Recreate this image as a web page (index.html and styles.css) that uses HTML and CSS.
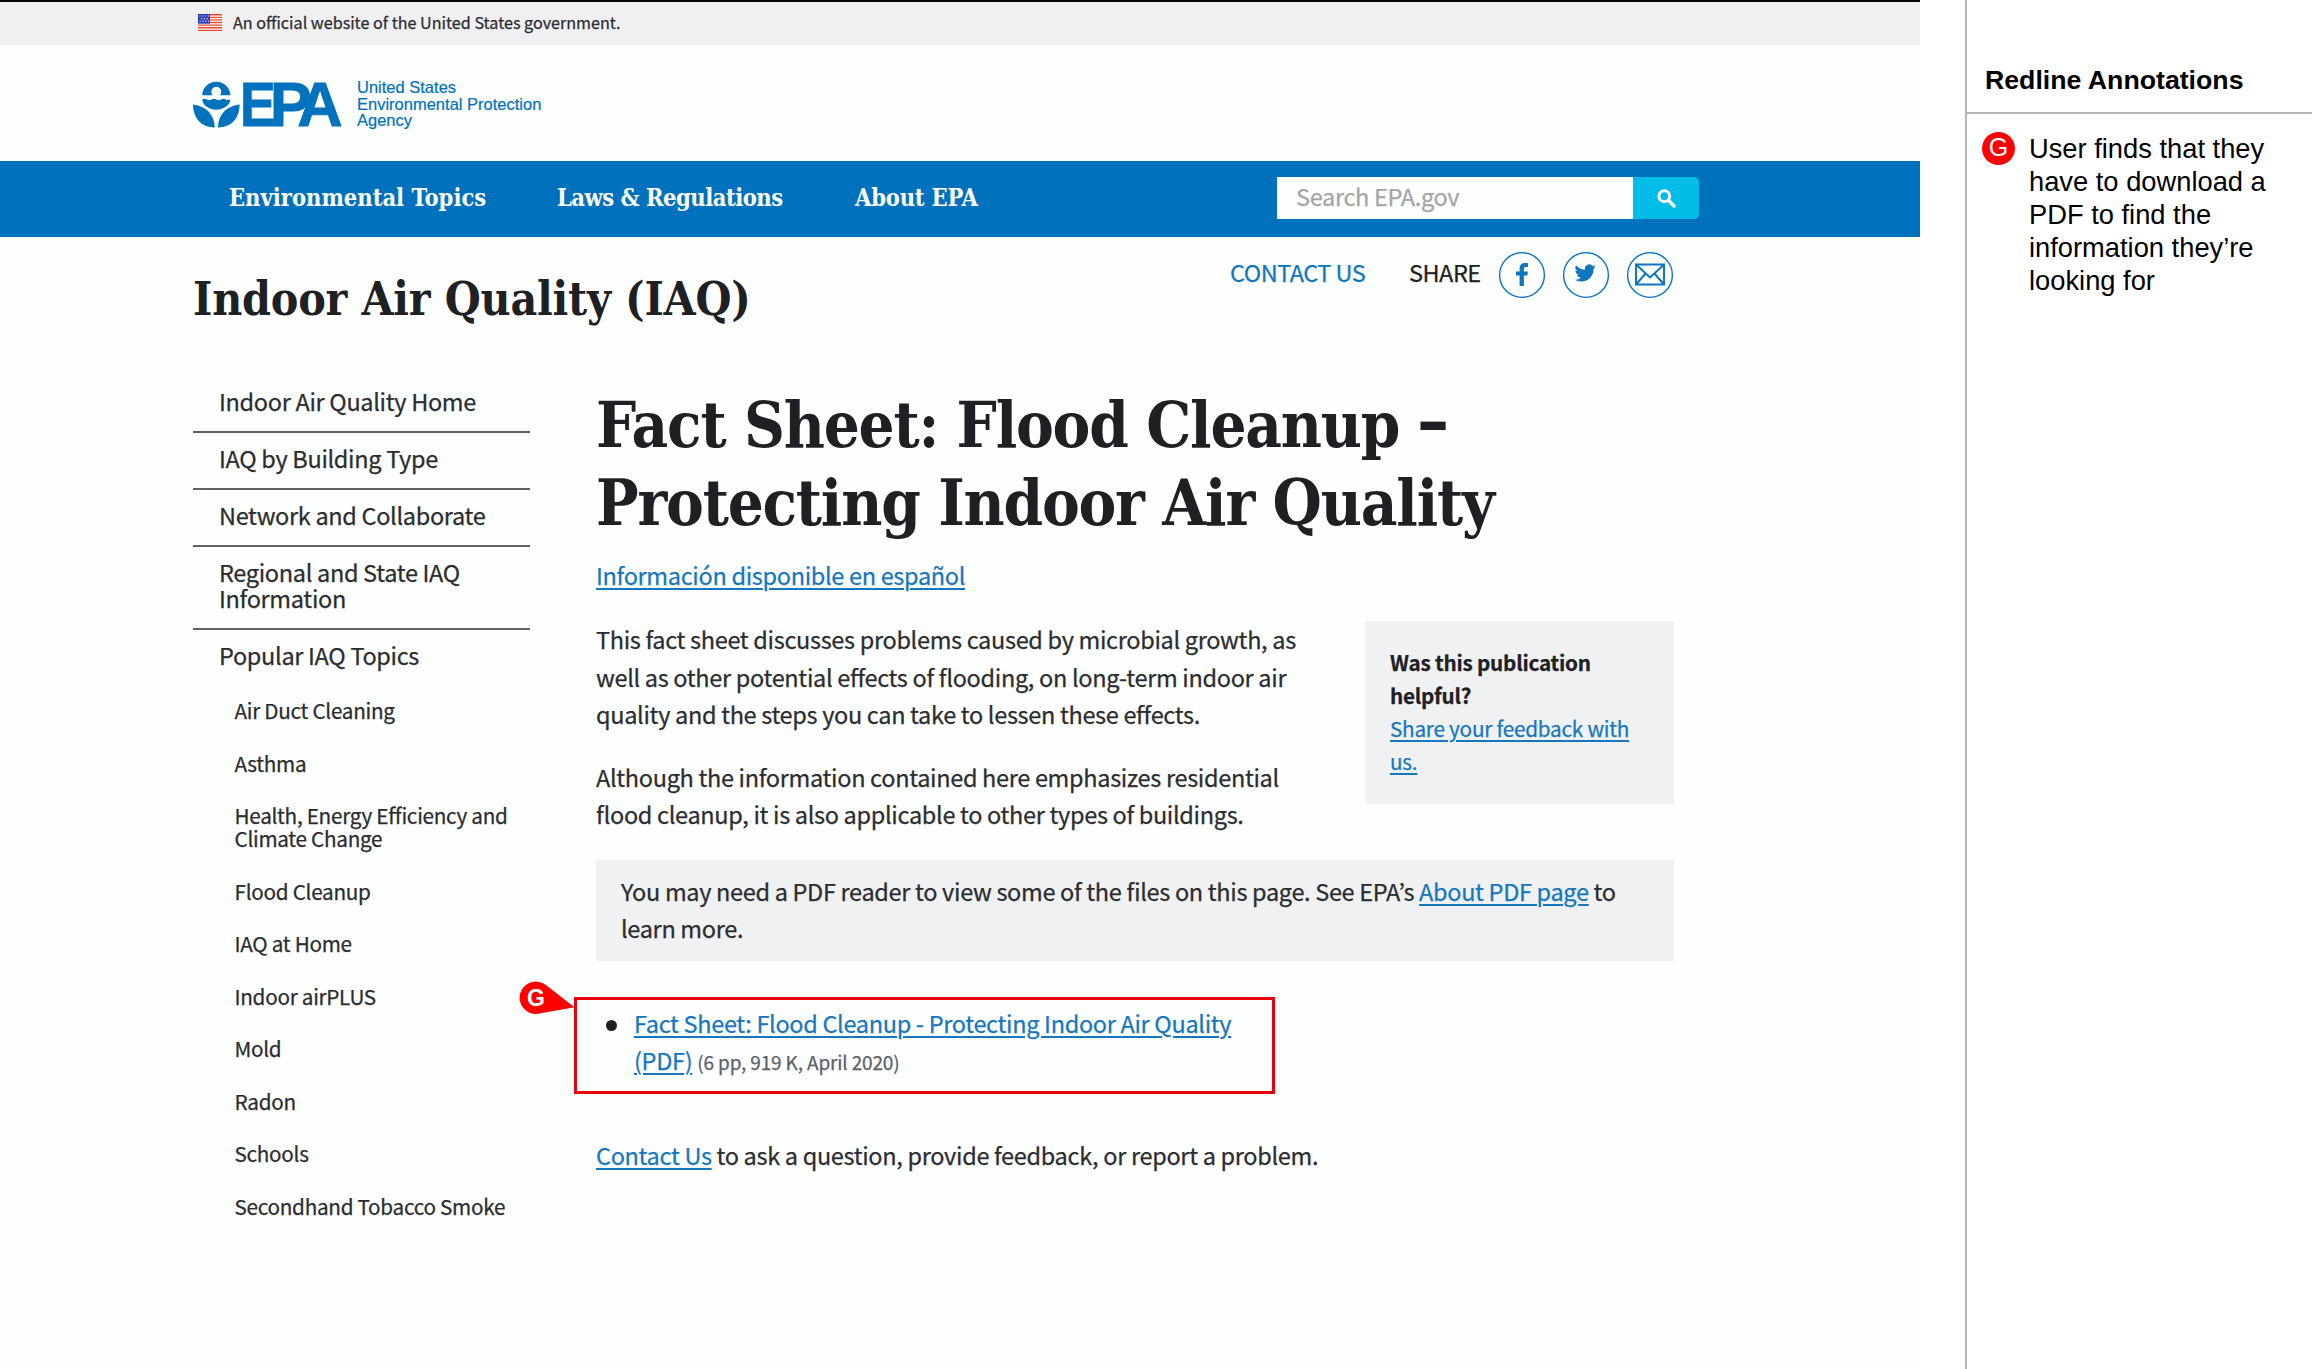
FILE: index.html
```html
<!DOCTYPE html>
<html lang="en">
<head>
<meta charset="utf-8">
<title>Fact Sheet: Flood Cleanup - Protecting Indoor Air Quality</title>
<link rel="stylesheet" href="styles.css">
</head>
<body>
<div class="screen">
  <div class="gov-banner">
    <svg class="flag" viewBox="0 0 24 17" aria-hidden="true">
      <rect width="24" height="17" fill="#fff"/>
      <path d="M0 .7h24M0 3.3h24M0 5.9h24M0 8.5h24M0 11.1h24M0 13.7h24M0 16.3h24" stroke="#e8472f" stroke-width="1.35"/>
      <rect width="12" height="9.6" fill="#2a3cb8"/>
      <path d="M1.5 2h10M3 4.6h8M1.5 7.2h10" stroke="#dfe4ff" stroke-width="1.2" stroke-dasharray="1.2 1.6"/>
    </svg>
    <span class="gov-text">An official website of the United States government.</span>
  </div>
  <header class="brand">
    <svg class="logo" viewBox="0 -30 150 100" role="img" aria-label="EPA">
      <g fill="#0071bc">
        <path d="M9.3 14.3A14 13.6 0 0 1 37.3 14.3H26.9A5 5 0 1 0 19.7 14.3Z"/>
        <path d="M9.3 18.2Q11.6 17.2 14 18.4T18.6 18.4 23.3 18.4 28 18.4 32.6 18.4 37.3 18.2A14 10.5 0 0 1 9.3 18.2Z"/>
        <path d="M0 23.5C12 25 21 32 21.8 46.4C9 46.6 .2 38 0 23.5Z"/>
        <path d="M46.6 23.5C34.6 25 25.6 32 24.8 46.4C37.6 46.6 46.4 38 46.6 23.5Z"/>
      </g>
      <g class="logo-letters">
        <text transform="translate(47 44.9) scale(.85 1)">E</text>
        <text x="76.8" y="44.9">P</text>
        <text x="104.2" y="44.9">A</text>
      </g>
    </svg>
    <div class="agency">United States<br>Environmental Protection<br>Agency</div>
  </header>
  <nav class="nav">
    <div class="nav-links">
      <a class="n1">Environmental Topics</a>
      <a class="n2">Laws &amp; Regulations</a>
      <a class="n3">About EPA</a>
    </div>
    <div class="search">
      <div class="search-input">Search EPA.gov</div>
      <div class="search-btn">
        <svg viewBox="0 0 19 19" width="19" height="19"><circle cx="7.3" cy="7.2" r="5.4" fill="none" stroke="#fff" stroke-width="3"/><path d="M11.3 11.2L17 17" stroke="#fff" stroke-width="3.6" stroke-linecap="round"/></svg>
      </div>
    </div>
  </nav>
  <div class="site-head">
    <div class="site-title">Indoor Air Quality (IAQ)</div>
    <div class="share">
      <a class="contact">CONTACT US</a>
      <span class="share-label">SHARE</span>
      <svg class="social" viewBox="0 0 48 48"><circle cx="24" cy="24" r="22.4"/><path class="solid" d="M21.6 35V24.6H18V20.6H21.6V17.6C21.6 14 23.8 12 27.2 12H30V16H28C26.4 16 25.9 16.8 25.9 18.2V20.6H29.9L29.4 24.6H25.9V35Z"/></svg>
      <svg class="social" viewBox="0 0 48 48"><circle cx="24" cy="24" r="22.4"/><path class="solid" transform="translate(12.6 11.4) scale(.88)" d="M23.95 4.57a10 10 0 0 1-2.82.77 4.96 4.96 0 0 0 2.16-2.72c-.95.55-2 .95-3.13 1.18a4.92 4.92 0 0 0-8.38 4.48C7.69 8.09 4.07 6.13 1.64 3.16a4.92 4.92 0 0 0 1.52 6.57 4.9 4.9 0 0 1-2.23-.61v.06a4.92 4.92 0 0 0 3.95 4.83 5 5 0 0 1-2.21.08 4.94 4.94 0 0 0 4.6 3.42A9.87 9.87 0 0 1 0 19.54a13.99 13.99 0 0 0 7.55 2.21c9.05 0 14-7.5 14-13.98 0-.21 0-.42-.02-.63a9.94 9.94 0 0 0 2.46-2.55z"/></svg>
      <svg class="social" viewBox="0 0 48 48"><circle cx="24" cy="24" r="22.4"/><path class="line" d="M10 13.5H38V33.5H10ZM10.5 14L24 26.5 37.5 14M10.5 33L19.5 22.5M37.5 33L28.5 22.5"/></svg>
    </div>
  </div>
  <div class="columns">
    <ul class="side">
      <li>Indoor Air Quality Home</li>
      <li>IAQ by Building Type</li>
      <li>Network and Collaborate</li>
      <li>Regional and State IAQ<br>Information</li>
      <li class="last">Popular IAQ Topics
        <ul class="sub">
          <li>Air Duct Cleaning</li>
          <li>Asthma</li>
          <li>Health, Energy Efficiency and<br>Climate Change</li>
          <li>Flood Cleanup</li>
          <li>IAQ at Home</li>
          <li>Indoor airPLUS</li>
          <li>Mold</li>
          <li>Radon</li>
          <li>Schools</li>
          <li>Secondhand Tobacco Smoke</li>
        </ul>
      </li>
    </ul>
    <main class="main">
      <h1>Fact Sheet: Flood Cleanup <span class="dash">-</span><br>Protecting Indoor Air Quality</h1>
      <p class="lang"><a class="link">Información disponible en español</a></p>
      <div class="intro">
        <div class="intro-text">
          <p>This fact sheet discusses problems caused by microbial growth, as<br>well as other potential effects of flooding, on long-term indoor air<br>quality and the steps you can take to lessen these effects.</p>
          <p>Although the information contained here emphasizes residential<br>flood cleanup, it is also applicable to other types of buildings.</p>
        </div>
        <div class="feedback"><b>Was this publication<br>helpful?</b><br><a class="link">Share your feedback with<br>us.</a></div>
      </div>
      <div class="pdf-note">You may need a PDF reader to view some of the files on this page. See EPA’s <a class="link">About PDF page</a> to<br>learn more.</div>
      <div class="redline">
        <svg class="marker" viewBox="0 0 56 34"><path d="M27.5 4.6L55.5 26.2 19 32.8A16.2 16.2 0 1 1 27.5 4.6Z" fill="#f00"/><text x="16.7" y="24.9" text-anchor="middle">G</text></svg>
        <div class="file"><a class="link">Fact Sheet: Flood Cleanup - Protecting Indoor Air Quality<br>(PDF)</a> <span class="meta">(6 pp, 919 K, April 2020)</span></div>
      </div>
      <p class="contact-line"><a class="link">Contact Us</a> to ask a question, provide feedback, or report a problem.</p>
    </main>
  </div>
</div>
<aside class="notes">
  <h2>Redline Annotations</h2>
  <div class="note">
    <span class="badge">G</span>
    <p>User finds that they<br>have to download a<br>PDF to find the<br>information they’re<br>looking for</p>
  </div>
</aside>
</body>
</html>
```
FILE: styles.css
```css
* { box-sizing: border-box; }
body {
  margin: 0;
  display: flex;
  height: 1369px;
  overflow: hidden;
  background: #fff;
  color: #2b2c2f;
  font-family: "Noto Sans CJK JP", "Noto Sans", sans-serif;
  font-feature-settings: "liga";
}
p, h1, h2, ul { margin: 0; padding: 0; font-weight: 400; }
ul { list-style: none; }
.screen { width: 1920px; background: #fdfefe; letter-spacing: -.32px; -webkit-text-stroke: .25px; }

.gov-banner {
  height: 45px;
  border-top: 2px solid #0a0a0c;
  background: #f0f0f2;
  display: flex;
  align-items: center;
  padding: 0 0 3px 198px;
  gap: 11px;
}
.flag { width: 24px; height: 17px; }
.gov-text { font-size: 16.15px; line-height: 24px; letter-spacing: 0; }

.brand { height: 116px; padding: 6px 0 0 193px; display: flex; letter-spacing: 0; -webkit-text-stroke: 0; }
.logo { width: 150px; height: 100px; }
.logo-letters { font: 700 63px "Liberation Sans", sans-serif; fill: #0071bc; stroke: #0071bc; stroke-width: .8; }
.agency { margin: 28px 0 0 14px; font: 16.5px/16.5px "Liberation Sans", sans-serif; color: #0071bc; -webkit-text-stroke: .2px; }

.nav { height: 76px; background: #0071bc; display: flex; justify-content: space-between; padding: 16px 221px 0 229px; }
.nav-links { display: flex; font: 700 23.5px/42px "DejaVu Serif Condensed", "DejaVu Serif", serif; font-stretch: condensed; color: #fff; letter-spacing: 0; -webkit-text-stroke: 0; }
.nav-links a { white-space: nowrap; }
.n1 { width: 328px; }
.n2 { width: 298px; letter-spacing: -.5px; }
.n3 { letter-spacing: -.2px; }
.search { display: flex; height: 42px; }
.search-input { width: 356px; background: #fdfefe; padding-left: 19px; font-size: 23.5px; line-height: 39px; color: #a3a5a8; }
.search-btn { width: 66px; background: #00bde8; border-radius: 0 5px 5px 0; display: flex; align-items: center; justify-content: center; }

.site-head { height: 138px; display: flex; justify-content: space-between; padding: 0 246px 0 193px; }
.site-title { font: 700 46px/60px "DejaVu Serif Condensed", "DejaVu Serif", serif; color: #1f2023; padding-top: 32px; white-space: nowrap; letter-spacing: -.2px; -webkit-text-stroke: 0; }
.share { display: flex; height: 48px; margin-top: 14px; font-size: 23.5px; line-height: 43px; letter-spacing: -.5px; }
.contact { color: #0f76be; width: 179px; }
.share-label { color: #212121; width: 89px; }
.social { width: 48px; height: 48px; margin-right: 16px; fill: none; stroke: #0f76be; stroke-width: 1.4; }
.social:last-child { margin-right: 0; }
.social .solid { fill: #0f76be; stroke: none; }
.social .line { stroke-width: 2; }

.columns { display: flex; padding-left: 193px; gap: 66px; }
.side { width: 337px; font-size: 23.5px; line-height: 25.6px; padding-top: 1px; }
.side > li { padding: 13px 20px 16.4px 26px; border-bottom: 2px solid #5f6266; }
.side > .last { border: 0; padding-bottom: 0; }
.sub { font-size: 20.7px; line-height: 22.6px; padding: 16px 0 0 15.5px; white-space: nowrap; letter-spacing: -.28px; }
.sub li { padding: 15px 0; }

.main { width: 1078px; font-size: 23.5px; line-height: 37.6px; }
h1 { font: 700 63px/78px "DejaVu Serif Condensed", "DejaVu Serif", serif; color: #1f2023; white-space: nowrap; padding-top: 11px; letter-spacing: -1.2px; -webkit-text-stroke: 0; }
.dash { display: inline-block; transform: translate(3px, -4px) scaleX(1.45); }
.link { color: #1776bd; text-decoration: underline; text-decoration-thickness: 2px; text-underline-offset: 3px; }
.lang { padding-top: 15.4px; }
.intro { display: flex; justify-content: space-between; margin-top: 26px; }
.intro p { white-space: nowrap; margin-bottom: 25px; }
.feedback { width: 309px; height: 183px; margin-top: .5px; background: #f0f1f3; padding: 24.5px 25px; font-size: 20.7px; line-height: 33px; white-space: nowrap; letter-spacing: -.22px; }
.feedback b { color: #1f2023; }
.pdf-note { height: 101px; margin-top: .6px; background: #f0f1f3; padding: 13px 25px; white-space: nowrap; }
.redline { position: relative; width: 701px; height: 97px; margin: 36px 0 0 -22px; border: 3px solid #e8000b; padding: 5px 0 0 57px; white-space: nowrap; }
.marker { position: absolute; left: -58px; top: -19px; width: 56px; height: 34px; }
.marker text { font: 700 23px "Liberation Sans", sans-serif; fill: #fff; }
.file::before { content: ""; position: absolute; left: 29px; top: 20px; width: 11px; height: 11px; border-radius: 50%; background: #1f2023; }
.meta { font-size: 19px; color: #5b616b; letter-spacing: -.15px; }
.contact-line { padding-top: 43px; }

.notes { width: 347px; margin-left: 45px; border-left: 2px solid #b5b5b5; font-family: "Liberation Sans", Arial, sans-serif; color: #000; }
.notes h2 { font-size: 26.7px; font-weight: 700; line-height: 34px; height: 114px; padding: 63px 0 0 18px; border-bottom: 2px solid #b5b5b5; }
.note { display: flex; padding: 18px 0 0 15px; }
.note p { font-size: 27.3px; line-height: 33px; padding-left: 14px; white-space: nowrap; }
.badge { width: 33px; height: 33px; border-radius: 50%; background: #f00; color: #fff; font-size: 25px; line-height: 31px; text-align: center; }
```
